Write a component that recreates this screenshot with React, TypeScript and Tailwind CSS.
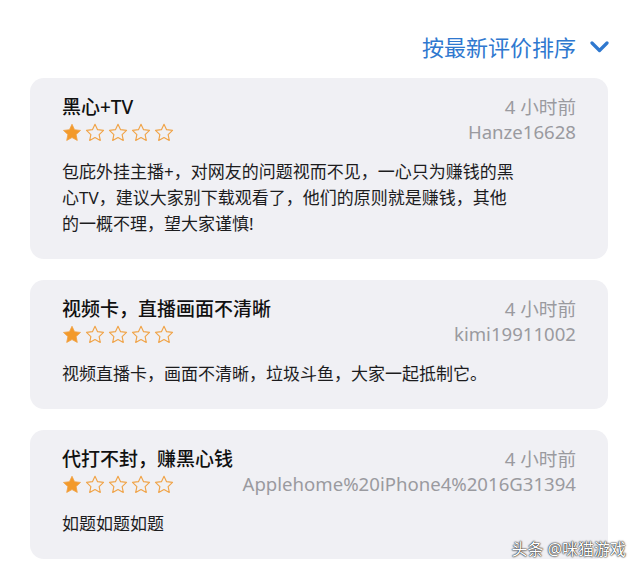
const reviews = [
  {
    title: "黑心+TV",
    time: "4 小时前",
    user: "Hanze16628",
    lines: [
      "包庇外挂主播+，对网友的问题视而不见，一心只为赚钱的黑",
      "心TV，建议大家别下载观看了，他们的原则就是赚钱，其他",
      "的一概不理，望大家谨慎!",
    ],
  },
  {
    title: "视频卡，直播画面不清晰",
    time: "4 小时前",
    user: "kimi19911002",
    lines: ["视频直播卡，画面不清晰，垃圾斗鱼，大家一起抵制它。"],
  },
  {
    title: "代打不封，赚黑心钱",
    time: "4 小时前",
    user: "Applehome%20iPhone4%2016G31394",
    lines: ["如题如题如题"],
  },
];

const Star = ({ filled }: { filled: boolean }) => (
  <svg width="20" height="19" viewBox="0 0 24 23" className="shrink-0">
    <path
      d="M12 1.5l3.1 6.6 7.2.9-5.3 5 1.4 7.1L12 17.6l-6.4 3.5 1.4-7.1-5.3-5 7.2-.9z"
      fill={filled ? "#f39a2b" : "none"}
      stroke="#f0a347"
      strokeWidth={filled ? 1 : 1.4}
      strokeLinejoin="round"
    />
  </svg>
);

const ReviewCard = ({ r }: { r: (typeof reviews)[number] }) => (
  <div className="rounded-[14px] bg-[#f0f0f4] px-[32px] pt-[18px] pb-[22px]">
    {/* head */}
    <div className="flex justify-between">
      <div className="flex flex-col gap-[3px]">
        <div className="text-[19px] leading-[22px] font-medium text-[#111]">{r.title}</div>
        <div className="flex h-[22px] items-center gap-[3px]">
          <Star filled />
          <Star filled={false} />
          <Star filled={false} />
          <Star filled={false} />
          <Star filled={false} />
        </div>
      </div>
      <div className="flex flex-col items-end gap-[3px] text-[18.6px] leading-[22px] text-[#9a9a9f]">
        <div>{r.time}</div>
        <div>{r.user}</div>
      </div>
    </div>
    {/* body */}
    <div className="mt-[16px] text-[17px] leading-[26px] text-[#1c1c1e]">
      {r.lines.map((l, i) => (
        <div key={i} className="whitespace-nowrap">
          {l}
        </div>
      ))}
    </div>
  </div>
);

export default function App() {
  return (
    <div
      className="relative h-[571px] w-[640px] overflow-hidden bg-white"
      style={{ fontFamily: '"Noto Sans", "Noto Sans CJK SC", sans-serif' }}
    >
      {/* sort */}
      <div className="flex items-center justify-end gap-[14px] pt-[35px] pr-[31px]">
        <span className="text-[22px] leading-[24px] text-[#2f78cf]">按最新评价排序</span>
        <svg width="19" height="12" viewBox="0 0 19 12">
          <path d="M2 2l7.5 7.5L17 2" fill="none" stroke="#2f78cf" strokeWidth="3.2" strokeLinecap="round" strokeLinejoin="round" />
        </svg>
      </div>
      <div className="mx-[30px] mt-[19px] flex w-[578px] flex-col gap-[21px]">
        {reviews.map((r, i) => (
          <ReviewCard key={i} r={r} />
        ))}
      </div>
      {/* watermark */}
      <div className="absolute right-[14px] bottom-[12px] text-[16px] leading-[20px] text-white [text-shadow:0_0_2px_#000,0_0_1px_#000]">
        头条 @咪猫游戏
      </div>
    </div>
  );
}
